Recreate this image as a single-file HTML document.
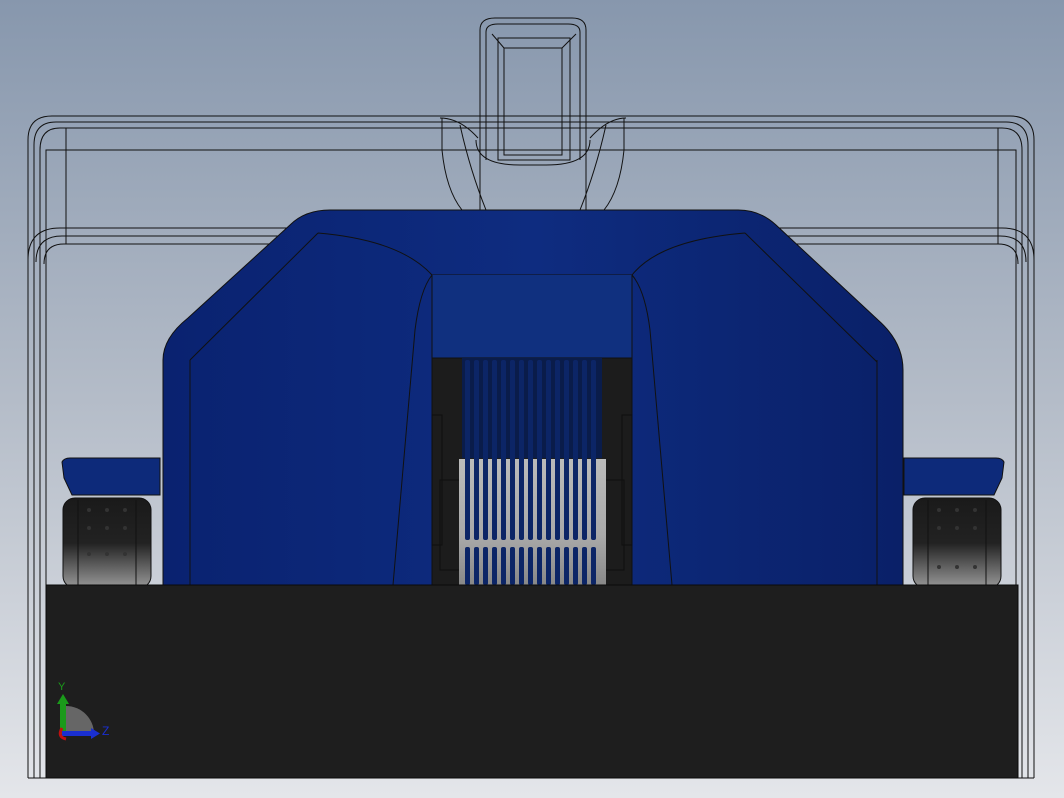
<!DOCTYPE html><html><head><style>html,body{margin:0;padding:0;width:1064px;height:798px;overflow:hidden}</style></head><body>
<svg width="1064" height="798" viewBox="0 0 1064 798" xmlns="http://www.w3.org/2000/svg" style="display:block;font-family:'Liberation Sans',sans-serif">
<defs>
<linearGradient id="bg" x1="0" y1="0" x2="0" y2="1"><stop offset="0" stop-color="#8797ad"/><stop offset="0.5" stop-color="#b4bcc8"/><stop offset="1" stop-color="#e4e6ea"/></linearGradient>
<linearGradient id="bl" x1="0" y1="0" x2="1" y2="0"><stop offset="0" stop-color="#0a2270"/><stop offset="0.5" stop-color="#0e2c80"/><stop offset="1" stop-color="#0a2068"/></linearGradient>
<linearGradient id="wh" x1="0" y1="0" x2="0" y2="1"><stop offset="0" stop-color="#1a1a1a"/><stop offset="0.5" stop-color="#222"/><stop offset="1" stop-color="#999"/></linearGradient>
<linearGradient id="gr" x1="0" y1="0" x2="0" y2="1"><stop offset="0" stop-color="#bbb"/><stop offset="0.6" stop-color="#aaa"/><stop offset="1" stop-color="#888"/></linearGradient>
</defs>
<rect width="1064" height="798" fill="url(#bg)"/>
<g fill="none" stroke="#111" stroke-width="1">
<path d="M28,778 V140 Q28,116 52,116 H1010 Q1034,116 1034,140 V778"/>
<path d="M34,778 V145 Q34,122 56,122 H1006 Q1028,122 1028,145 V778"/>
<path d="M40,778 V150 Q40,128 60,128 H1002 Q1022,128 1022,150 V778"/>
<path d="M46,778 V150 H1016 V778"/>
<path d="M28,260 Q28,228 60,228 H1002 Q1034,228 1034,260"/>
<path d="M36,262 Q36,236 62,236 H1000 Q1026,236 1026,262"/>
<path d="M44,264 Q44,244 64,244 H998 Q1018,244 1018,264"/>
<path d="M66,128 V244 M998,128 V244"/>
<path d="M28,778 H1034"/>
<path d="M480,210 V30 Q480,18 495,18 H572 Q586,18 586,30 V210"/>
<path d="M486,160 V32 Q486,24 498,24 H568 Q580,24 580,32 V160"/>
<path d="M498,160 V38 H570 V160 Z"/>
<path d="M504,155 V48 H562 V155 Z"/>
<path d="M492,34 L504,48 M576,34 L562,48"/>
<path d="M440,118 Q460,118 478,138 M626,118 Q608,118 590,138"/>
<path d="M442,118 V150 Q446,190 462,210 M624,118 V150 Q620,190 604,210"/>
<path d="M460,125 Q470,170 486,210 M606,125 Q596,170 580,210"/>
<path d="M476,140 Q476,165 520,165 H546 Q590,165 590,140"/>
</g>
<path d="M62,462 Q64,458 70,458 H160 V495 H72 L64,478 Z" fill="#0d2a7a" stroke="#111"/>
<path d="M1004,462 Q1002,458 996,458 H904 V495 H994 L1002,478 Z" fill="#0d2a7a" stroke="#111"/>
<rect x="63" y="498" width="88" height="90" rx="12" fill="url(#wh)" stroke="#111"/>
<rect x="913" y="498" width="88" height="90" rx="12" fill="url(#wh)" stroke="#111"/>
<path d="M78,500 V585 M136,500 V585 M928,500 V585 M986,500 V585" stroke="#111" fill="none"/>
<g fill="#333">
<circle cx="89" cy="510" r="2"/><circle cx="107" cy="510" r="2"/><circle cx="125" cy="510" r="2"/>
<circle cx="89" cy="528" r="2"/><circle cx="107" cy="528" r="2"/><circle cx="125" cy="528" r="2"/>
<circle cx="89" cy="554" r="2"/><circle cx="107" cy="554" r="2"/><circle cx="125" cy="554" r="2"/>
<circle cx="939" cy="510" r="2"/><circle cx="957" cy="510" r="2"/><circle cx="975" cy="510" r="2"/>
<circle cx="939" cy="528" r="2"/><circle cx="957" cy="528" r="2"/><circle cx="975" cy="528" r="2"/>
<circle cx="939" cy="567" r="2"/><circle cx="957" cy="567" r="2"/><circle cx="975" cy="567" r="2"/>
</g>
<path d="M163,585 V360 Q163,338 188,318 L290,225 Q305,210 330,210 H738 Q760,210 776,225 L878,320 Q903,342 903,370 V585 Z" fill="url(#bl)" stroke="#111"/>
<path d="M190,360 V585 M877,360 V585 M190,360 L318,233 M877,362 L745,233 M318,233 Q400,240 432,275 M745,233 Q660,240 632,275 M432,275 H632" fill="none" stroke="#111"/>
<path d="M432,275 V358 H632 V275" fill="#10307f" stroke="#111"/>
<path d="M432,275 Q420,290 415,330 L393,585 M632,275 Q645,290 650,330 L672,585" fill="none" stroke="#111"/>
<rect x="432" y="358" width="200" height="227" fill="#1c1c1c" stroke="#111"/>
<g fill="none" stroke="#0e0e0e">
<rect x="432" y="415" width="10" height="130"/><rect x="440" y="480" width="20" height="90"/>
<rect x="622" y="415" width="10" height="130"/><rect x="604" y="480" width="20" height="90"/>
</g>
<rect x="462" y="358" width="140" height="100" fill="#0a1c4a"/>
<rect x="459" y="459" width="147" height="126" fill="url(#gr)"/>
<g fill="#0c2566">
<rect x="465" y="360" width="5" height="180" rx="2"/><rect x="474" y="360" width="5" height="180" rx="2"/><rect x="483" y="360" width="5" height="180" rx="2"/><rect x="492" y="360" width="5" height="180" rx="2"/><rect x="501" y="360" width="5" height="180" rx="2"/><rect x="510" y="360" width="5" height="180" rx="2"/><rect x="519" y="360" width="5" height="180" rx="2"/><rect x="528" y="360" width="5" height="180" rx="2"/><rect x="537" y="360" width="5" height="180" rx="2"/><rect x="546" y="360" width="5" height="180" rx="2"/><rect x="555" y="360" width="5" height="180" rx="2"/><rect x="564" y="360" width="5" height="180" rx="2"/><rect x="573" y="360" width="5" height="180" rx="2"/><rect x="582" y="360" width="5" height="180" rx="2"/><rect x="591" y="360" width="5" height="180" rx="2"/>
<rect x="465" y="547" width="5" height="38" rx="2"/><rect x="474" y="547" width="5" height="38" rx="2"/><rect x="483" y="547" width="5" height="38" rx="2"/><rect x="492" y="547" width="5" height="38" rx="2"/><rect x="501" y="547" width="5" height="38" rx="2"/><rect x="510" y="547" width="5" height="38" rx="2"/><rect x="519" y="547" width="5" height="38" rx="2"/><rect x="528" y="547" width="5" height="38" rx="2"/><rect x="537" y="547" width="5" height="38" rx="2"/><rect x="546" y="547" width="5" height="38" rx="2"/><rect x="555" y="547" width="5" height="38" rx="2"/><rect x="564" y="547" width="5" height="38" rx="2"/><rect x="573" y="547" width="5" height="38" rx="2"/><rect x="582" y="547" width="5" height="38" rx="2"/><rect x="591" y="547" width="5" height="38" rx="2"/>
</g>
<rect x="46" y="585" width="972" height="193" fill="#1e1e1e" stroke="#0a0a0a"/>
<path d="M66,734 V706 A28,28 0 0 1 94,734 Z" fill="#666"/>
<rect x="60" y="702" width="6" height="32" fill="#1a9a1a"/>
<path d="M57,704 L63,694 L69,704 Z" fill="#1a9a1a"/>
<rect x="62" y="731" width="30" height="5" fill="#1a2fd0"/>
<path d="M91,728 L100,733.5 L91,739 Z" fill="#1a2fd0"/>
<path d="M62,728 Q57,737 66,739" fill="none" stroke="#c01010" stroke-width="3"/>
<text x="58" y="690" font-size="11" fill="#1a9a1a">Y</text>
<text x="102" y="735" font-size="12" fill="#1a2fd0">Z</text>
</svg>
</body></html>
